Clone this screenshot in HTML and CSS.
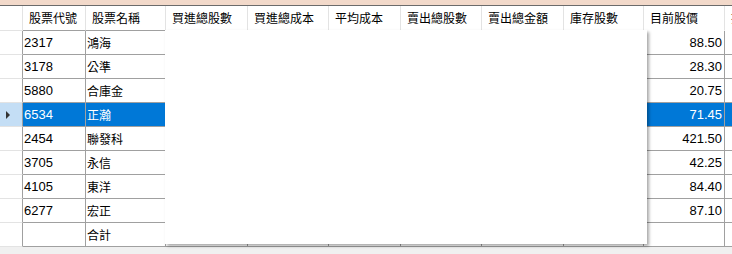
FILE: index.html
```html
<!DOCTYPE html>
<html lang="zh-Hant">
<head>
<meta charset="utf-8">
<title>股票庫存</title>
<link rel="stylesheet" href="styles.css">
</head>
<body>
<div class="window">
  <div class="titlebar"></div>
  <div class="grid-wrap">
    <div class="grid">
      <div class="c hc rh"></div>
      <div class="c hc hb">股票代號</div>
      <div class="c hc hb">股票名稱</div>
      <div class="c hc">買進總股數</div>
      <div class="c hc">買進總成本</div>
      <div class="c hc">平均成本</div>
      <div class="c hc">賣出總股數</div>
      <div class="c hc">賣出總金額</div>
      <div class="c hc">庫存股數</div>
      <div class="c hc">目前股價</div>
      <div class="c hc">損益</div>

      <div class="c rh"></div><div class="c num">2317</div><div class="c">鴻海</div><div class="c"></div><div class="c"></div><div class="c"></div><div class="c"></div><div class="c"></div><div class="c"></div><div class="c num r">88.50</div><div class="c"></div>
      <div class="c rh"></div><div class="c num">3178</div><div class="c">公準</div><div class="c"></div><div class="c"></div><div class="c"></div><div class="c"></div><div class="c"></div><div class="c"></div><div class="c num r">28.30</div><div class="c"></div>
      <div class="c rh"></div><div class="c num">5880</div><div class="c">合庫金</div><div class="c"></div><div class="c"></div><div class="c"></div><div class="c"></div><div class="c"></div><div class="c"></div><div class="c num r">20.75</div><div class="c"></div>
      <div class="c rh sel-rh"><span class="arrow"></span></div><div class="c num sel">6534</div><div class="c sel">正瀚</div><div class="c sel"></div><div class="c sel"></div><div class="c sel"></div><div class="c sel"></div><div class="c sel"></div><div class="c sel"></div><div class="c num r sel">71.45</div><div class="c sel"></div>
      <div class="c rh"></div><div class="c num">2454</div><div class="c">聯發科</div><div class="c"></div><div class="c"></div><div class="c"></div><div class="c"></div><div class="c"></div><div class="c"></div><div class="c num r">421.50</div><div class="c"></div>
      <div class="c rh"></div><div class="c num">3705</div><div class="c">永信</div><div class="c"></div><div class="c"></div><div class="c"></div><div class="c"></div><div class="c"></div><div class="c"></div><div class="c num r">42.25</div><div class="c"></div>
      <div class="c rh"></div><div class="c num">4105</div><div class="c">東洋</div><div class="c"></div><div class="c"></div><div class="c"></div><div class="c"></div><div class="c"></div><div class="c"></div><div class="c num r">84.40</div><div class="c"></div>
      <div class="c rh"></div><div class="c num">6277</div><div class="c">宏正</div><div class="c"></div><div class="c"></div><div class="c"></div><div class="c"></div><div class="c"></div><div class="c"></div><div class="c num r">87.10</div><div class="c"></div>
      <div class="c rh"></div><div class="c num"></div><div class="c">合計</div><div class="c"></div><div class="c"></div><div class="c"></div><div class="c"></div><div class="c"></div><div class="c"></div><div class="c num r"></div><div class="c"></div>
    </div>
    <div class="overlay"></div>
  </div>
</div>
</body>
</html>
```

FILE: styles.css
```css
html, body {
  margin: 0;
  padding: 0;
}
body {
  width: 732px;
  height: 254px;
  overflow: hidden;
  background: #f0f0f0;
  font-family: "Noto Sans CJK TC", "Liberation Sans", sans-serif;
  font-size: 12px;
  color: #000;
}
.window {
  width: 732px;
  height: 254px;
  overflow: hidden;
}
.titlebar {
  height: 5px;
  background: #f2d9ca;
  border-bottom: 1px solid #6b6b6b;
}
.grid-wrap {
  position: relative;
}
.grid {
  display: grid;
  grid-template-columns: 23px 63px 80px 82px 81px 72px 81px 82px 80px 81px 100px;
  grid-template-rows: 25px;
  grid-auto-rows: 24px;
  width: 825px;
  background: #fff;
}
.c {
  box-sizing: border-box;
  border-right: 1px solid #a0a0a0;
  border-bottom: 1px solid #a0a0a0;
  display: flex;
  align-items: center;
  padding-left: 1px;
  white-space: nowrap;
  overflow: hidden;
  line-height: 14px;
}
.hc {
  border-right-color: #e3e3e3;
  border-bottom-color: transparent;
  padding-left: 6px;
}
.hc.hb {
  border-bottom-color: #a0a0a0;
}
.rh {
  border-bottom-color: #e3e3e3;
  padding-left: 0;
  background: #fff;
}
.hc.rh {
  border-right-color: #e3e3e3;
  border-bottom-color: #e3e3e3;
}
.num {
  font-family: "Liberation Sans Narrow", "Liberation Sans", sans-serif;
  font-size: 13px;
}
.r {
  justify-content: flex-end;
  padding-right: 2px;
}
.sel {
  background: #0078d7;
  color: #fff;
}
.sel-rh {
  background: #c4def5;
}
.arrow {
  display: block;
  width: 0;
  height: 0;
  margin-left: 6px;
  border-left: 4px solid #333;
  border-top: 4px solid transparent;
  border-bottom: 4px solid transparent;
}
.overlay {
  position: absolute;
  left: 165px;
  top: 24px;
  width: 482px;
  height: 214px;
  background: #fff;
  box-shadow: 2px 2px 3px rgba(0, 0, 0, 0.35);
}
```
